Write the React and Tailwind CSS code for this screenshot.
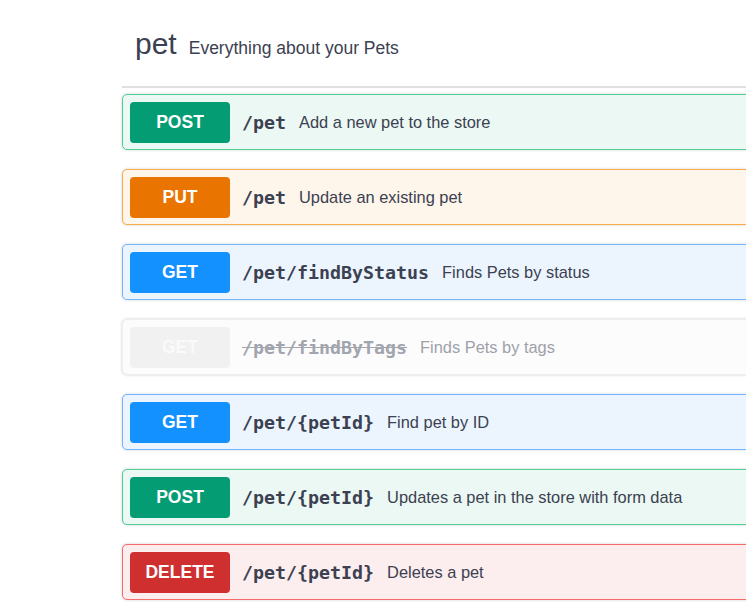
import React from "react";

const ops = [
	{ method: "POST", path: "/pet", desc: "Add a new pet to the store", tone: "post" },
	{ method: "PUT", path: "/pet", desc: "Update an existing pet", tone: "put" },
	{ method: "GET", path: "/pet/findByStatus", desc: "Finds Pets by status", tone: "get" },
	{ method: "GET", path: "/pet/findByTags", desc: "Finds Pets by tags", tone: "deprecated" },
	{ method: "GET", path: "/pet/{petId}", desc: "Find pet by ID", tone: "get" },
	{ method: "POST", path: "/pet/{petId}", desc: "Updates a pet in the store with form data", tone: "post" },
	{ method: "DELETE", path: "/pet/{petId}", desc: "Deletes a pet", tone: "delete" },
];

const tones = {
	post: { block: "bg-[#ebf8f3] border-[#4fcf92]", badge: "bg-[#039c73] text-white" },
	put: { block: "bg-[#fef5eb] border-[#fcab4a]", badge: "bg-[#e97500] text-white" },
	get: { block: "bg-[#ecf5fe] border-[#72b6fb]", badge: "bg-[#1391ff] text-white" },
	delete: { block: "bg-[#fcedee] border-[#f76b6b]", badge: "bg-[#d02f2f] text-white" },
	deprecated: { block: "bg-[#fcfcfc] border-[#efefef]", badge: "bg-[#f1f1f1] text-[#fafafa]" },
};

const OpBlock = ({ op }) => {
	const tone = tones[op.tone];
	const isDeprecated = op.tone === "deprecated";
	return (
		<div
			className={`flex items-center h-[56px] border rounded-[5px] pl-[7px] shadow-[0_0_3px_rgba(0,0,0,0.19)] ${tone.block}`}
		>
			<div
				className={`w-[100px] h-[41px] rounded-[4px] flex items-center justify-center font-bold text-[17.5px] ${tone.badge}`}
				style={{ fontFamily: "'Liberation Sans', Arial, sans-serif" }}
			>
				{op.method}
			</div>
			<span
				className={`ml-[12px] pr-[13px] font-bold text-[18.3px] ${isDeprecated ? "text-[#a2a5ad] line-through" : "text-[#3b4151]"}`}
				style={{ fontFamily: "'DejaVu Sans Mono', 'Liberation Mono', monospace" }}
			>
				{op.path}
			</span>
			<span
				className={`text-[16.4px] ${isDeprecated ? "text-[#9ea1a9]" : "text-[#3b4151]"}`}
				style={{ fontFamily: "'Liberation Sans', Arial, sans-serif" }}
			>
				{op.desc}
			</span>
		</div>
	);
};

export default function App() {
	return (
		<div className="w-[746px] h-[603px] overflow-hidden bg-white">
			<div className="ml-[122px] w-[720px]">
				<div className="pt-[29px] pb-[25px] pl-[13px] flex items-baseline border-b-2 border-[#e0e0e0]"
					style={{ fontFamily: "'Liberation Sans', Arial, sans-serif" }}>
					<span className="text-[30px] leading-[30px] text-[#3b4151]">pet</span>
					<span className="ml-[12px] text-[17.5px] text-[#3b4151]">Everything about your Pets</span>
				</div>
				<div className="flex flex-col gap-[19px] pt-[6px]">
					{ops.map((op, i) => (
						<OpBlock key={i} op={op} />
					))}
				</div>
			</div>
		</div>
	);
}
